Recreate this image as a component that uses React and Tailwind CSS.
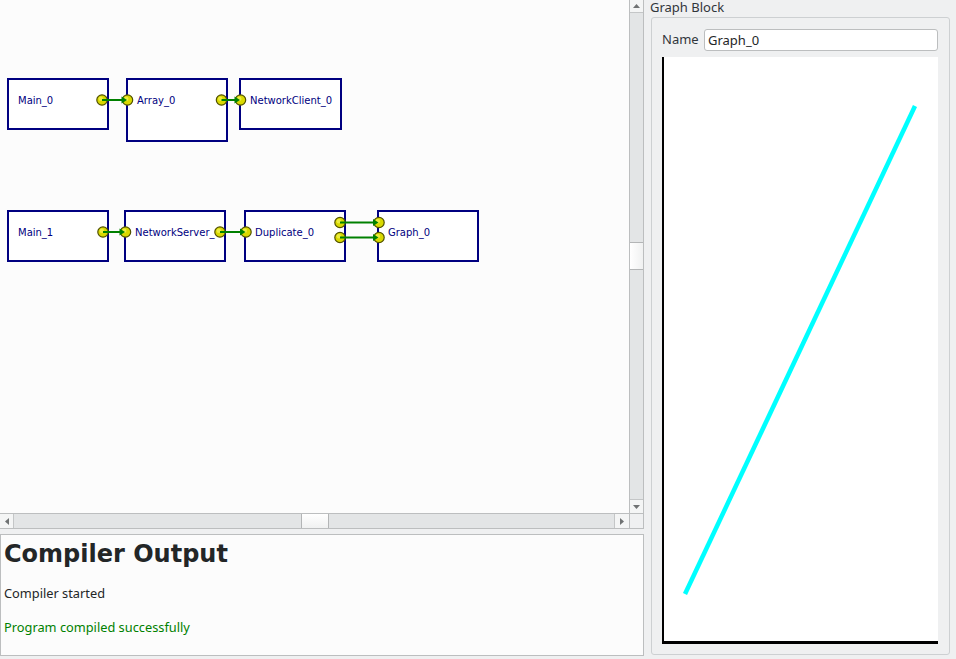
import React from "react";

const nodes = [
  { label: "Main_0", cls: "left-[7px] top-[78px] w-[102px] h-[52px]" },
  { label: "Array_0", cls: "left-[126px] top-[78px] w-[102px] h-[64px]" },
  { label: "NetworkClient_0", cls: "left-[239px] top-[78px] w-[103px] h-[52px]" },
  { label: "Main_1", cls: "left-[7px] top-[210px] w-[102px] h-[52px]" },
  { label: "NetworkServer_0", cls: "left-[124px] top-[210px] w-[102px] h-[52px]" },
  { label: "Duplicate_0", cls: "left-[244px] top-[210px] w-[102px] h-[52px]" },
  { label: "Graph_0", cls: "left-[377px] top-[210px] w-[102px] h-[52px]" },
];

const links = [
  [102, 100, 127.5, 100],
  [221.5, 100, 240.5, 100],
  [103, 232, 125.5, 232],
  [220, 232, 246, 232],
  [340, 222.5, 379, 222.5],
  [340, 237.5, 379, 237.5],
];

function Port({ x, y }) {
  return (
    <g>
      <circle cx={x} cy={y} r="5.2" fill="#d9d900" stroke="#505000" strokeWidth="1.2" />
      <circle cx={x - 1.2} cy={y - 1.3} r="2.2" fill="#ecec40" />
    </g>
  );
}

function Canvas() {
  return (
    <div className="relative w-[629px] h-[513px] bg-[#fcfcfc] overflow-hidden">
      {nodes.map((n) => (
        <div
          key={n.label}
          className={`absolute ${n.cls} bg-white border-2 border-[#000080] pl-[9px] pt-[14px] overflow-hidden`}
        >
          <div className="leading-[14px] text-[10px] text-[#000080] whitespace-nowrap font-['DejaVu_Sans',sans-serif]">
            {n.label}
          </div>
        </div>
      ))}
      <svg className="absolute left-0 top-0" width="629" height="513">
        {links.map(([x1, y1, x2, y2], i) => (
          <g key={"p" + i}>
            <Port x={x1} y={y1} />
            <Port x={x2} y={y2} />
          </g>
        ))}
        {links.map(([x1, y1, x2, y2], i) => (
          <g key={"l" + i}>
            <line x1={x1} y1={y1} x2={x2 - 4} y2={y2} stroke="#008000" strokeWidth="2" />
            <polygon
              points={`${x2 - 6},${y2 - 3.5} ${x2 - 6},${y2 + 3.5} ${x2 - 0.5},${y2}`}
              fill="#008000"
            />
          </g>
        ))}
      </svg>
    </div>
  );
}

function Tri({ dir }) {
  const pts =
    dir === "up"
      ? "0,4 7,4 3.5,0"
      : dir === "down"
      ? "0,0 7,0 3.5,4"
      : dir === "left"
      ? "4,0 4,7 0,3.5"
      : "0,0 0,7 4,3.5";
  const w = dir === "up" || dir === "down" ? 7 : 4;
  const h = dir === "up" || dir === "down" ? 4 : 7;
  return (
    <svg width={w} height={h}>
      <polygon points={pts} fill="#6f7273" />
    </svg>
  );
}

function VScroll() {
  return (
    <div className="w-[15px] h-[513px] border-l border-r border-[#bcbebf] bg-[#e3e5e6] flex flex-col">
      <div className="h-[13px] bg-[#f4f5f5] border-b border-[#c4c6c7] flex items-center justify-center">
        <Tri dir="up" />
      </div>
      <div className="h-[229px]" />
      <div className="h-[28px] border-y border-[#b3b5b6] bg-gradient-to-r from-[#ffffff] to-[#f0f1f1]" />
      <div className="flex-1" />
      <div className="h-[14px] bg-[#f4f5f5] border-t border-[#c4c6c7] flex items-center justify-center">
        <Tri dir="down" />
      </div>
    </div>
  );
}

function HScroll() {
  return (
    <div className="w-[629px] h-[16px] border-y border-[#bcbebf] bg-[#e3e5e6] flex">
      <div className="w-[14px] bg-[#f4f5f5] border-r border-[#c4c6c7] flex items-center justify-center">
        <Tri dir="left" />
      </div>
      <div className="w-[287px]" />
      <div className="w-[28px] border-x border-[#b3b5b6] bg-gradient-to-b from-[#ffffff] to-[#f0f1f1]" />
      <div className="flex-1" />
      <div className="w-[15px] bg-[#f4f5f5] border-l border-[#c4c6c7] flex items-center justify-center">
        <Tri dir="right" />
      </div>
    </div>
  );
}

export default function App() {
  return (
    <div className="w-[956px] h-[659px] bg-[#eff0f1] flex overflow-hidden font-['Noto_Sans',sans-serif] text-[13px] text-[#232627]">
      <div className="w-[644px] flex flex-col">
        <div className="flex h-[513px]">
          <Canvas />
          <VScroll />
        </div>
        <div className="flex h-[16px]">
          <HScroll />
          <div className="w-[15px] h-[16px] border border-[#bcbebf] bg-[#eff0f1]" />
        </div>
        <div className="h-[5px]" />
        <div className="h-[122px] border border-[#bcbebf] bg-[#fcfcfc] pl-[3px]">
          <div className="mt-[3px] text-[24px] leading-[32px] font-bold text-[#232627] font-['DejaVu_Sans',sans-serif]">
            Compiler Output
          </div>
          <div className="mt-[14px] leading-[18px] text-[12.8px]">Compiler started</div>
          <div className="mt-[16px] leading-[18px] text-[12.8px] text-[#008000]">Program compiled successfully</div>
        </div>
      </div>
      <div className="flex-1 flex flex-col">
        <div className="pl-[6px] leading-[16px] h-[16px] -mt-[1px] text-[#31363b]">Graph Block</div>
        <div className="mt-[2px] ml-[7px] w-[299px] h-[638px] border border-[#cdd0d2] rounded-[3px] pl-[10px] pr-[11px] pt-[11px] flex flex-col">
          <div className="flex items-center h-[22px]">
            <div className="w-[42px] text-[#31363b]">Name</div>
            <div className="flex-1 h-[22px] border border-[#bcbebf] rounded-[3px] bg-white pl-[3px] leading-[20px] text-[#232627]">
              Graph_0
            </div>
          </div>
          <div className="mt-[6px] h-[587px] bg-white border-l-2 border-b-[3px] border-black">
            <svg width="274" height="584" className="block">
              <line x1="21" y1="537" x2="251" y2="49" stroke="#00ffff" strokeWidth="4.5" />
            </svg>
          </div>
        </div>
      </div>
    </div>
  );
}
